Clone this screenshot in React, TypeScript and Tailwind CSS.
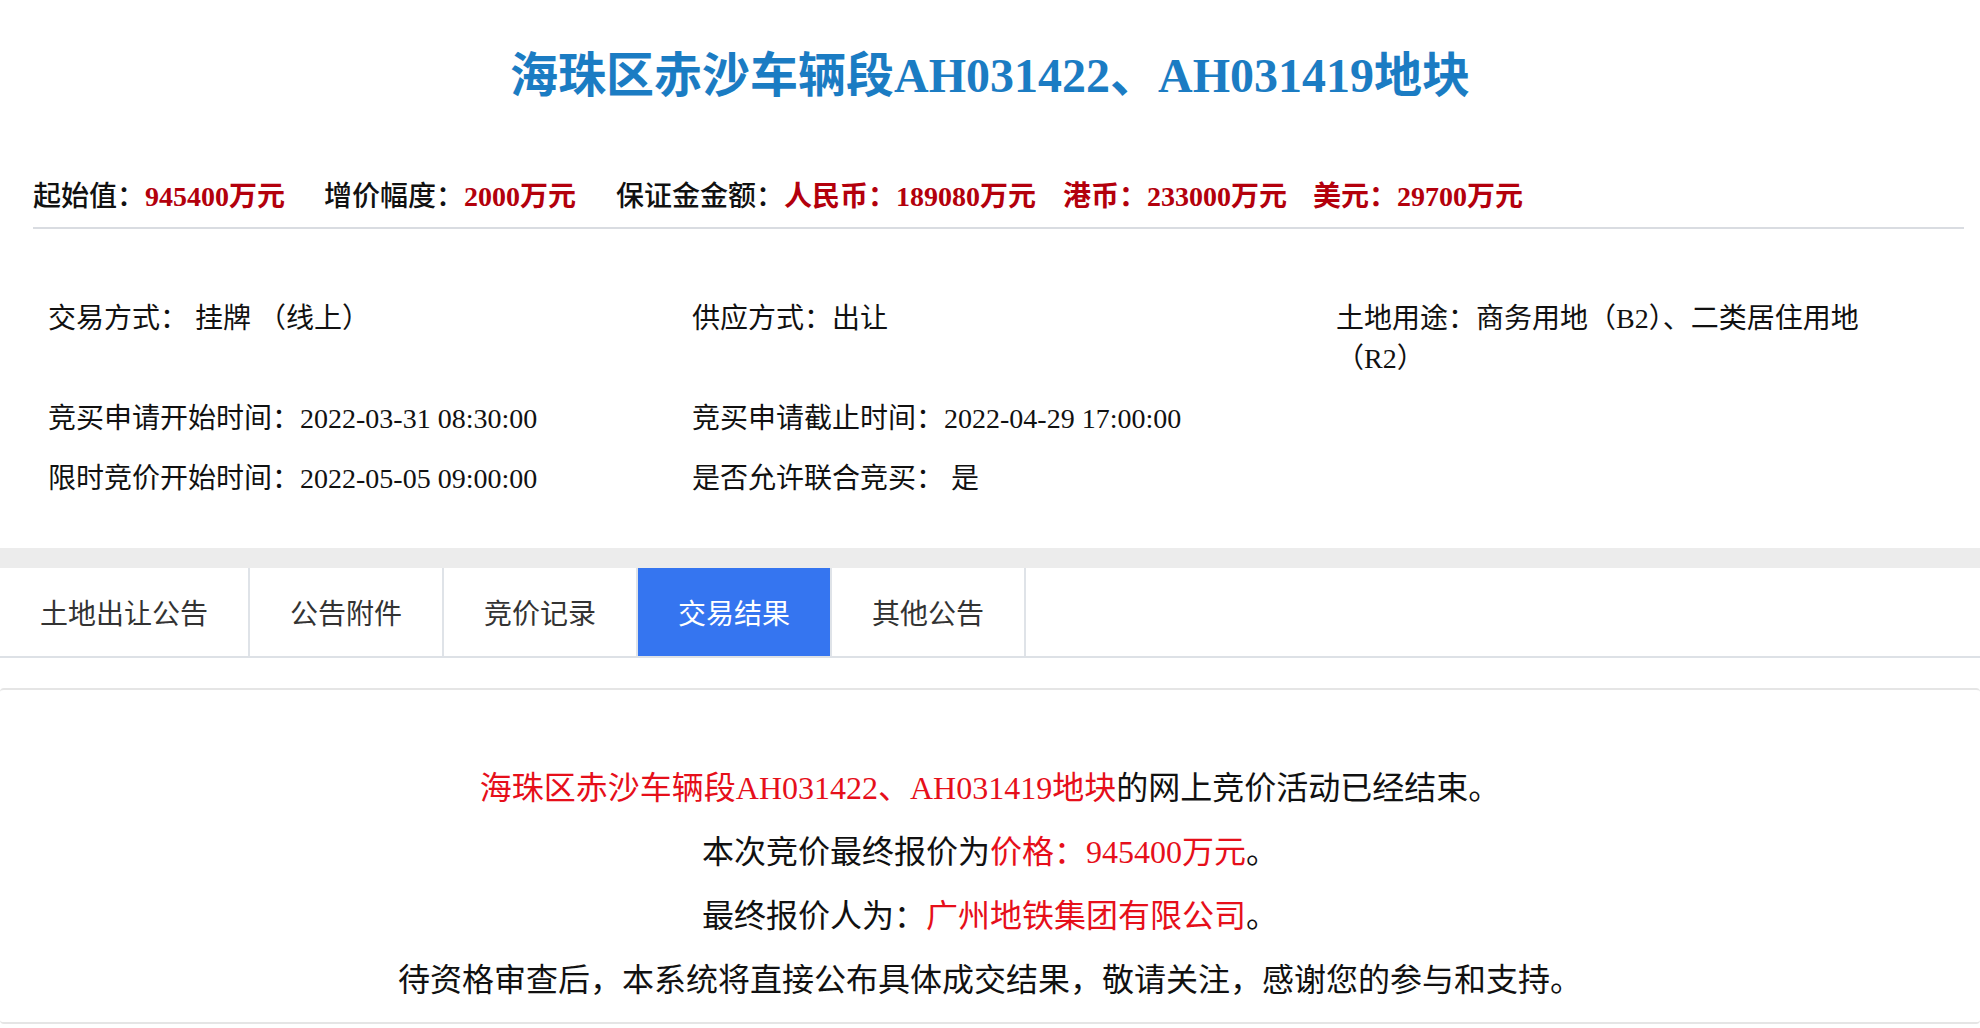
import React, { useState } from "react";

const serif = "font-['Liberation_Serif','Noto_Sans_CJK_SC',serif]";
const sans = "font-['Noto_Sans_CJK_SC','Liberation_Sans',sans-serif]";

const tabs = ["土地出让公告", "公告附件", "竞价记录", "交易结果", "其他公告"];

const title = "海珠区赤沙车辆段AH031422、AH031419地块";

const App = () => {
  const [activeTab, setActiveTab] = useState<number>(3);

  return (
    <div className="w-[1980px] min-h-[1028px] bg-white text-[#111]">
      {/* title */}
      <h1
        className={`${serif} pt-[44px] text-center text-[48px] leading-[64px] font-bold text-[#1b7cc3]`}
      >
        {title}
      </h1>

      {/* price row */}
      <div
        className={`${serif} mt-[69px] ml-[33px] mr-[16px] pb-[10px] border-b-2 border-[#d9dce1] flex items-center text-[28px] leading-[40px]`}
      >
        <span className="font-medium">起始值：</span>
        <span className="font-bold text-[#b3000c]">945400万元</span>
        <span className="ml-[39px] font-medium">增价幅度：</span>
        <span className="font-bold text-[#b3000c]">2000万元</span>
        <span className="ml-[40px] font-medium">保证金金额：</span>
        <span className="font-bold text-[#b3000c]">人民币：189080万元</span>
        <span className="ml-[27px] font-bold text-[#b3000c]">
          港币：233000万元
        </span>
        <span className="ml-[26px] font-bold text-[#b3000c]">
          美元：29700万元
        </span>
      </div>

      {/* info grid */}
      <div
        className={`${serif} pt-[60px] pb-[39px] pl-[48px] grid grid-cols-[644px_644px_1fr] text-[28px] leading-[40px]`}
      >
        <div className="py-[10px]">交易方式： 挂牌 （线上）</div>
        <div className="py-[10px]">供应方式：出让</div>
        <div className="py-[10px] max-w-[560px]">
          土地用途：商务用地（B2）、二类居住用地（R2）
        </div>
        <div className="py-[10px]">竞买申请开始时间：2022-03-31 08:30:00</div>
        <div className="py-[10px]">竞买申请截止时间：2022-04-29 17:00:00</div>
        <div className="py-[10px]"></div>
        <div className="py-[10px]">限时竞价开始时间：2022-05-05 09:00:00</div>
        <div className="py-[10px]">是否允许联合竞买： 是</div>
        <div className="py-[10px]"></div>
      </div>

      <div className="h-[20px] bg-[#ececec]" />

      {/* tabs */}
      <div className={`${sans} flex border-b-2 border-[#dde1e6]`}>
        {tabs.map((tab, i) => (
          <button
            key={tab}
            onClick={() => setActiveTab(i)}
            className={
              i === activeTab
                ? "h-[88px] px-[40px] border-r-2 border-[#dfe3e8] bg-[#3575f0] text-white text-[28px]"
                : "h-[88px] px-[40px] border-r-2 border-[#dfe3e8] bg-white text-[#333] text-[28px]"
            }
          >
            {tab}
          </button>
        ))}
      </div>

      {/* result */}
      <div
        className={`${serif} mt-[30px] pt-[66px] pb-[10px] border-t-2 border-b-2 border-[#e5e5e5] rounded-[4px] text-center text-[32px] leading-[64px]`}
      >
        <p>
          <span className="text-[#e60f1a]">{title}</span>
          的网上竞价活动已经结束。
        </p>
        <p>
          本次竞价最终报价为<span className="text-[#e60f1a]">价格：945400万元</span>。
        </p>
        <p>
          最终报价人为：<span className="text-[#e60f1a]">广州地铁集团有限公司</span>。
        </p>
        <p>
          待资格审查后，本系统将直接公布具体成交结果，敬请关注，感谢您的参与和支持。
        </p>
      </div>
    </div>
  );
};

export default App;
